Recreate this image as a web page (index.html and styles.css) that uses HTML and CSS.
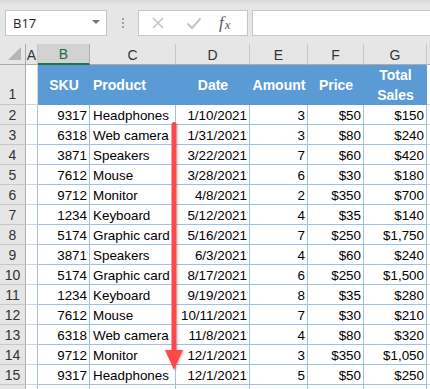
FILE: index.html
```html
<!DOCTYPE html>
<html>
<head>
<meta charset="utf-8">
<link rel="stylesheet" href="styles.css">
</head>
<body>
<div class="app">
  <div class="fbar">
    <div class="namebox"><span>B17</span><span class="caret"></span></div>
    <div class="dots"><i></i><i></i><i></i></div>
    <div class="btns">
      <svg class="ico" width="14" height="14" viewBox="0 0 14 14"><path d="M2 2 L12 12 M12 2 L2 12" stroke="#c4c4c4" stroke-width="1.6" fill="none"/></svg>
      <svg class="ico" width="16" height="14" viewBox="0 0 16 14"><path d="M1.5 7.5 L6 12 L14.5 2.5" stroke="#c4c4c4" stroke-width="2" fill="none"/></svg>
      <span class="fx">f<span class="x">x</span></span>
    </div>
    <div class="finput"></div>
  </div>
  <div class="sheet">
    <div class="grid">
      <div class="ch corner"><span class="tri"></span></div>
      <div class="ch">A</div>
      <div class="ch sel">B</div>
      <div class="ch">C</div>
      <div class="ch">D</div>
      <div class="ch">E</div>
      <div class="ch">F</div>
      <div class="ch">G</div>
      <div class="ch last"></div>

      <div class="rh rh1">1</div>
      <div class="c plain"></div>
      <div class="th ctr">SKU</div>
      <div class="th">Product</div>
      <div class="th ctr">Date</div>
      <div class="th ctr">Amount</div>
      <div class="th ctr">Price</div>
      <div class="th ctr two">Total<br>Sales</div>
      <div class="c plain"></div>
    </div>
    <div class="grid body" id="body"></div>
    <div class="arrow">
      <svg width="24" height="252" viewBox="0 0 24 252">
        <defs><filter id="sh" x="-50%" y="-5%" width="200%" height="110%"><feDropShadow dx="1" dy="1" stdDeviation="1" flood-color="#000" flood-opacity="0.25"/></filter></defs>
        <g filter="url(#sh)">
          <rect x="9.5" y="0" width="5" height="232" rx="2.5" fill="#fd4a4a"/>
          <path d="M3 228 L21 228 L12 248 Z" fill="#fd4a4a"/>
        </g>
      </svg>
    </div>
  </div>
</div>
<script src="app.js"></script>
</body>
</html>
```

FILE: app.js
```javascript
const rows = [
  [9317,"Headphones","1/10/2021",3,"$50","$150"],
  [6318,"Web camera","1/31/2021",3,"$80","$240"],
  [3871,"Speakers","3/22/2021",7,"$60","$420"],
  [7612,"Mouse","3/28/2021",6,"$30","$180"],
  [9712,"Monitor","4/8/2021",2,"$350","$700"],
  [1234,"Keyboard","5/12/2021",4,"$35","$140"],
  [5174,"Graphic card","5/16/2021",7,"$250","$1,750"],
  [3871,"Speakers","6/3/2021",4,"$60","$240"],
  [5174,"Graphic card","8/17/2021",6,"$250","$1,500"],
  [1234,"Keyboard","9/19/2021",8,"$35","$280"],
  [7612,"Mouse","10/11/2021",7,"$30","$210"],
  [6318,"Web camera","11/8/2021",4,"$80","$320"],
  [9712,"Monitor","12/1/2021",3,"$350","$1,050"],
  [9317,"Headphones","12/1/2021",5,"$50","$250"]
];
const body = document.getElementById("body");
let html = "";
rows.forEach((r, i) => {
  html += `<div class="rh">${i + 2}</div><div class="c plain"></div>`;
  r.forEach((v, j) => {
    const cls = j === 1 ? "c t" : "c n";
    html += `<div class="${cls}">${v}</div>`;
  });
  html += `<div class="c plain"></div>`;
});
html += `<div class="rh"></div><div class="c plain"></div>`;
for (let j = 0; j < 6; j++) html += `<div class="c"></div>`;
html += `<div class="c plain"></div>`;
body.innerHTML = html;
```

FILE: styles.css
```css
* { box-sizing: border-box; margin: 0; padding: 0; }
html, body { width: 430px; height: 389px; overflow: hidden; background: #fff; }
.app { font-family: "Liberation Sans", Arial, sans-serif; }

.fbar {
  height: 44px;
  background: linear-gradient(#d8d8d8 0, #e6e6e6 5px, #e6e6e6 100%);
  display: flex;
  align-items: center;
  padding: 1px 0 0 5px;
}
.namebox {
  width: 102px; height: 26px;
  background: #fff; border: 1px solid #c6c6c6;
  display: flex; align-items: center; justify-content: space-between;
  padding: 0 6px 0 7px;
  font-family: "Open Sans", "Noto Sans", sans-serif; font-size: 13px; color: #222;
}
.caret { width: 0; height: 0; border-left: 4px solid transparent; border-right: 4px solid transparent; border-top: 4px solid #777; margin-top: -1px; }
.dots { width: 31px; display: flex; flex-direction: column; align-items: center; gap: 2px; }
.dots i { display: block; width: 2px; height: 2px; background: #a0a0a0; }
.btns {
  width: 110px; height: 26px;
  background: #fff; border: 1px solid #c6c6c6;
  display: flex; align-items: center;
  padding-left: 12px;
}
.btns .ico:first-child { margin-right: 21px; }
.btns .ico:nth-child(2) { margin-right: 17px; }
.fx { font-family: "Liberation Serif", serif; font-style: italic; font-size: 17px; color: #5a5a5a; line-height: 1; display: flex; align-items: baseline; }
.fx .x { font-size: 13px; margin-left: 1px; position: relative; top: 1px; }
.finput { flex: 1; height: 26px; margin-left: 4px; background: #fff; border: 1px solid #c6c6c6; border-right: none; }

.sheet { position: relative; }
.grid {
  display: grid;
  grid-template-columns: 26px 12px 52px 86px 74px 58px 56px 63px 1fr;
  grid-template-rows: 21px 40px;
}
.grid.body { grid-template-rows: repeat(15, 20px); grid-auto-rows: 20px; }

.ch {
  background: #e6e6e6;
  border-right: 1px solid #c8c8c8;
  border-bottom: 1px solid #ababab;
  font-size: 14px; color: #333;
  display: flex; align-items: center; justify-content: center;
  padding-top: 1px;
}
.ch.corner { position: relative; border-right-color: #ababab; }
.ch .tri { position: absolute; right: 4px; bottom: 4px; width: 0; height: 0; border-left: 13px solid transparent; border-bottom: 13px solid #b5b5b5; }
.ch.sel { background: #d2d2d2; color: #1f6b40; border-bottom: 2px solid #217346; border-right-color: #b0b0b0; }
.ch.last { border-right: none; }

.rh {
  background: #e6e6e6;
  border-right: 1px solid #ababab;
  border-bottom: 1px solid #c8c8c8;
  font-size: 14px; color: #333;
  display: flex; align-items: center; justify-content: center;
}
.rh1 { align-items: flex-end; padding-bottom: 2px; }

.c {
  border-right: 1px solid #9bc2e6;
  border-bottom: 1px solid #9bc2e6;
  font-size: 13.4px; color: #000;
  display: flex; align-items: center;
  white-space: nowrap; overflow: hidden;
  padding: 1px 3px 0 3px;
}
.c.plain { border-right: 1px solid #d4d4d4; border-bottom: 1px solid #d4d4d4; }
.grid.body > .c.plain:nth-child(9n+2) { border-right-color: #9bc2e6; }
.c.n { justify-content: flex-end; padding-right: 2px; }
.c.t { justify-content: flex-start; }

.th {
  background: #5b9bd5;
  color: #fff; font-weight: bold; font-size: 14px;
  display: flex; align-items: center;
  padding: 0 3px;
  border-bottom: 1px solid #5b9bd5;
}
.th.ctr { justify-content: center; text-align: center; }
.th.two { line-height: 20px; }

.arrow { position: absolute; left: 162px; top: 78px; width: 24px; height: 252px; }
.arrow svg { display: block; }
```
